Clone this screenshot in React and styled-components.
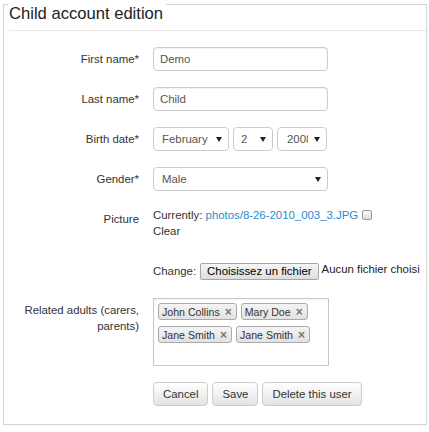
import React from 'react'
import styled, { createGlobalStyle } from 'styled-components'

const GlobalStyle = createGlobalStyle`
  html, body {
    margin: 0;
    padding: 0;
    background: #fff;
  }
  body {
    font-family: "Liberation Sans", Arial, sans-serif;
    font-size: 11.4px;
    color: #333;
  }
`

const Panel = styled.section`
  margin: 4px 2px 0 3px;
  border: 1px solid #d4d4d4;
  border-top: none;
  padding-bottom: 18px;
`

const TopRow = styled.div`
  display: flex;
`

const Edge = styled.span`
  border-top: 1px solid #d4d4d4;
  flex: ${(p) => (p.$grow ? '1 1 auto' : '0 0 4px')};
`

const Title = styled.h1`
  margin: 0;
  padding: 0 3px 6px 1px;
  font-size: 16.6px;
  line-height: 20px;
  font-weight: normal;
  color: #222;
`

const Divider = styled.hr`
  margin: 0 0 0 5px;
  border: 0;
  border-top: 1px solid #e8e8e8;
`

const Form = styled.form`
  display: grid;
  grid-template-columns: 135px 1fr;
  column-gap: 14px;
  row-gap: 16px;
  padding-top: 16px;
`

const Label = styled.label`
  text-align: right;
  line-height: ${(p) => (p.$multi ? '16px' : '24px')};
  padding-top: ${(p) => (p.$multi ? '4px' : '0')};
  color: #333;
`

const TextInput = styled.input`
  box-sizing: border-box;
  width: 175px;
  height: 24px;
  padding: 0 6px;
  border: 1px solid #ccc;
  border-radius: 4px;
  box-shadow: inset 0 1px 1px rgba(0, 0, 0, 0.06);
  font-family: inherit;
  font-size: 11.4px;
  color: #555;
  outline: none;
`

const Selects = styled.div`
  display: flex;
  gap: 4px;
`

const Select = styled.div`
  box-sizing: border-box;
  display: flex;
  align-items: center;
  width: ${(p) => p.$w}px;
  height: 24px;
  padding: 0 6px 0 ${(p) => p.$pl}px;
  border: 1px solid #ccc;
  border-radius: 4px;
  background: #fff;
  color: #555;
`

const Value = styled.span`
  flex: 1 1 auto;
  overflow: hidden;
  white-space: nowrap;
  max-width: ${(p) => (p.$clip ? `${p.$clip}px` : 'none')};
  margin-right: auto;
`

const Arrow = styled.span`
  flex: 0 0 auto;
  width: 0;
  height: 0;
  border-left: 3px solid transparent;
  border-right: 3px solid transparent;
  border-top: 5px solid #222;
`

const PictureCell = styled.div`
  display: flex;
  flex-direction: column;
`

const Line = styled.div`
  line-height: 16px;
  white-space: nowrap;
  color: #333;
`

const FileLink = styled.a`
  color: #2a8bd2;
  text-decoration: none;
`

const Check = styled.span`
  display: inline-block;
  box-sizing: border-box;
  width: 10px;
  height: 10px;
  margin-left: 4px;
  vertical-align: -1px;
  border: 1px solid #999;
  border-radius: 2px;
  background: linear-gradient(#fff, #dcdcdc);
`

const ChangeLine = styled.div`
  display: flex;
  align-items: center;
  height: 22px;
  margin-top: 21px;
  white-space: nowrap;
`

const FileButton = styled.span`
  box-sizing: border-box;
  height: 17px;
  line-height: 15px;
  margin-left: 4px;
  padding: 0 6px;
  border: 1px solid #a6a6a6;
  border-radius: 2px;
  background: linear-gradient(#f6f6f6, #dedede);
  color: #000;
`

const NoFile = styled.span`
  margin: 0 0 5px 3px;
  color: #222;
`

const TagBox = styled.div`
  box-sizing: border-box;
  width: 176px;
  height: 68px;
  padding: 4px;
  border: 1px solid #c8c8c8;
  box-shadow: inset 0 1px 2px rgba(0, 0, 0, 0.05);
  display: flex;
  flex-wrap: wrap;
  align-content: flex-start;
  gap: 6px 4px;
`

const Tag = styled.span`
  box-sizing: border-box;
  display: inline-flex;
  align-items: center;
  height: 17px;
  padding: 0 4px 0 3px;
  border: 1px solid #aaa;
  border-radius: 3px;
  background: linear-gradient(#f4f4f4, #e2e2e2);
  font-size: 10.6px;
  color: #333;
  white-space: nowrap;
`

const Remove = styled.span`
  margin-left: 5px;
  font-size: 12px;
  font-weight: bold;
  color: #777;
  line-height: 1;
`

const Actions = styled.div`
  display: flex;
  gap: 4px;
`

const Button = styled.button`
  box-sizing: border-box;
  height: 24px;
  padding: 0 9px;
  border: 1px solid #ccc;
  border-radius: 4px;
  background: linear-gradient(#fff, #e3e3e3);
  font-family: inherit;
  font-size: 11.4px;
  color: #333;
`

const adults = ['John Collins', 'Mary Doe', 'Jane Smith', 'Jane Smith']

const App = () => {
  return (
    <>
      <GlobalStyle />
      <Panel>
        <TopRow>
          <Edge />
          <Title>Child account edition</Title>
          <Edge $grow />
        </TopRow>
        <Divider />

        <Form onSubmit={(e) => e.preventDefault()}>
          <Label>First name*</Label>
          <div>
            <TextInput value="Demo" readOnly />
          </div>

          <Label>Last name*</Label>
          <div>
            <TextInput value="Child" readOnly />
          </div>

          <Label>Birth date*</Label>
          <Selects>
            <Select $w={76} $pl={8}>
              <Value>February</Value>
              <Arrow />
            </Select>
            <Select $w={40} $pl={7}>
              <Value>2</Value>
              <Arrow />
            </Select>
            <Select $w={50} $pl={9}>
              <Value $clip={21}>2008</Value>
              <Arrow />
            </Select>
          </Selects>

          <Label>Gender*</Label>
          <div>
            <Select $w={175} $pl={8}>
              <Value>Male</Value>
              <Arrow />
            </Select>
          </div>

          <Label>Picture</Label>
          <PictureCell>
            <Line>
              Currently: <FileLink href="#">photos/8-26-2010_003_3.JPG</FileLink>
              <Check />
            </Line>
            <Line>Clear</Line>
            <ChangeLine>
              Change:
              <FileButton>Choisissez un fichier</FileButton>
              <NoFile>Aucun fichier choisi</NoFile>
            </ChangeLine>
          </PictureCell>

          <Label $multi>Related adults (carers, parents)</Label>
          <TagBox>
            {adults.map((name, i) => (
              <Tag key={i}>
                {name}
                <Remove>×</Remove>
              </Tag>
            ))}
          </TagBox>

          <span />
          <Actions>
            <Button type="button">Cancel</Button>
            <Button type="submit">Save</Button>
            <Button type="button">Delete this user</Button>
          </Actions>
        </Form>
      </Panel>
    </>
  )
}

export default App
